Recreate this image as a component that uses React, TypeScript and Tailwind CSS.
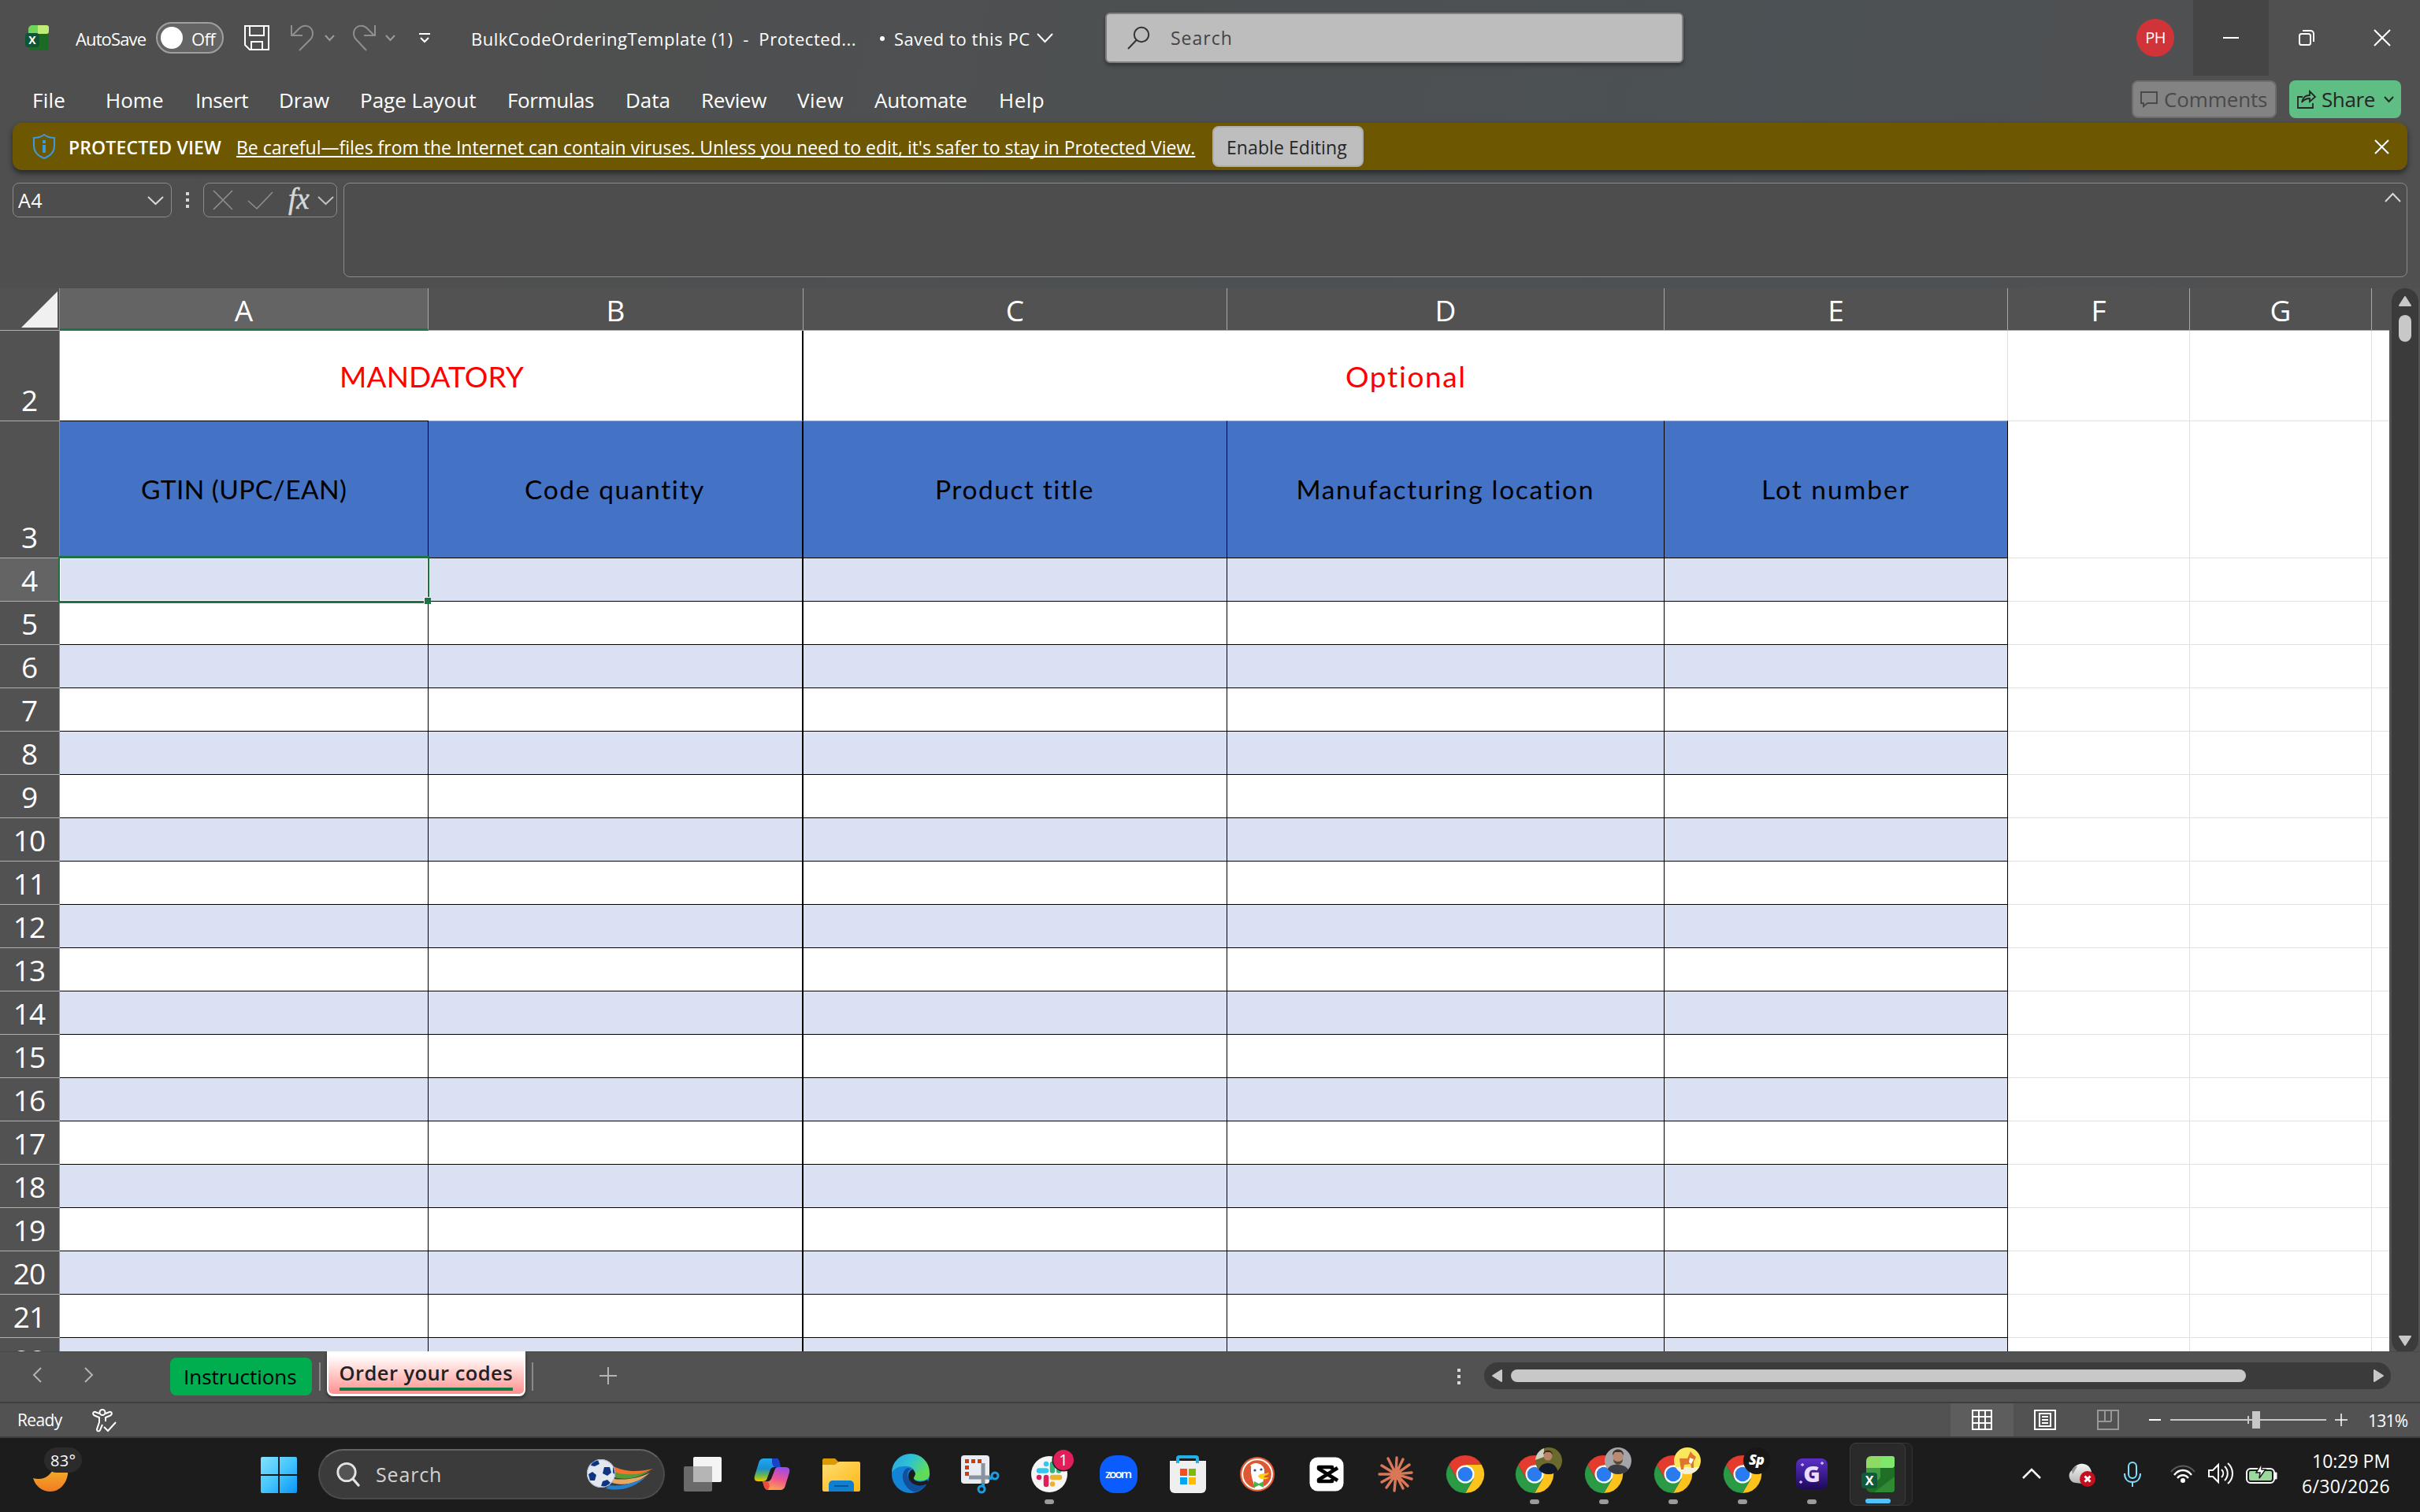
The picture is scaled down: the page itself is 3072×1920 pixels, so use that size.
import React, { useLayoutEffect, useRef, useState } from "react";

/** A label whose tracking is computed so the text fills the width of its box. */
function T({ className = "", inner: innerClass = "", children }: { className?: string; inner?: string; children: string }) {
  const box = useRef<HTMLSpanElement>(null);
  const inner = useRef<HTMLSpanElement>(null);
  const [track, setTrack] = useState(0);
  useLayoutEffect(() => {
    if (!box.current || !inner.current) return;
    const free = box.current.clientWidth - inner.current.offsetWidth;
    setTrack(free / children.length);
  }, [children]);
  return (
    <span ref={box} className={`block shrink-0 whitespace-nowrap leading-none ${className}`}>
      <span ref={inner} className={`inline-block ${innerClass}`} style={{ letterSpacing: track }}>
        {children}
      </span>
    </span>
  );
}

type SvgProps = { className?: string; w: number; h: number; children: React.ReactNode };
function Svg({ className = "", w, h, children }: SvgProps) {
  return (
    <svg
      width={w}
      height={h}
      viewBox={`0 0 ${w} ${h}`}
      fill="none"
      stroke="currentColor"
      strokeWidth={2}
      className={`block shrink-0 overflow-visible ${className}`}
    >
      {children}
    </svg>
  );
}

function Chevron({ className = "", w = 19, h = 9, sw = 2 }: { className?: string; w?: number; h?: number; sw?: number }) {
  return (
    <Svg w={w} h={h} className={className}>
      <path d={`M0 0 L${w / 2} ${h} L${w} 0`} strokeWidth={sw} />
    </Svg>
  );
}

function TitleBar() {
  return (
    <div className="flex h-24 items-center text-[22px] text-white">
      <Svg w={30} h={32} className="ml-8">
        <g stroke="none">
          <path d="M4 5a5 5 0 0 1 5-5h9v12H4z" fill="#6fd65c" />
          <path d="M16 0h11a3 3 0 0 1 3 3v5a3 3 0 0 1-3 3H16z" fill="#bfee78" />
          <path d="M4 11h26v18a3 3 0 0 1-3 3H9a5 5 0 0 1-5-5z" fill="#1d6a26" />
          <rect x="0" y="10" width="18" height="18" rx="4" fill="#0f5434" />
          <text x="9" y="24" fontSize="14" fontWeight="700" textAnchor="middle" fill="#fff" fontFamily="Open Sans, sans-serif">X</text>
        </g>
      </Svg>
      <T className="ml-[34px] mt-px w-[89px]">AutoSave</T>
      <div className="ml-[13px] flex h-10 w-[86px] items-center rounded-full border-2 border-[#a0a0a0] bg-[#646464]">
        <div className="ml-1 h-7 w-7 rounded-full bg-white" />
        <T className="ml-[11px] mt-px w-[30px]">Off</T>
      </div>
      <Svg w={32} h={32} className="ml-[26px]">
        <path d="M1 1H31V31H7L1 25Z M7 1V13H25V1 M9 31V21H23V31" />
      </Svg>
      <Svg w={30} h={32} className="ml-[27px] text-[#8f8f8f]">
        <path d="M1 0V13H15 M2 13L11 4C16 -1 24 0 27 6C29 10 28 15 25 18L11 32" />
      </Svg>
      <Chevron w={11} h={6} className="ml-[14px] text-[#9a9a9a]" />
      <Svg w={30} h={32} className="ml-[23px] text-[#8f8f8f]">
        <path d="M29 0V13H15 M28 13L19 4C14 -1 6 0 3 6C1 10 2 15 5 18L18 32" />
      </Svg>
      <Chevron w={11} h={6} className="ml-[13px] text-[#9a9a9a]" />
      <Svg w={14} h={12} className="ml-[31px]">
        <path d="M0 1H14 M2 6L7 11L12 6" />
      </Svg>
      <T className="ml-[52px] mt-px w-[489px]">{"BulkCodeOrderingTemplate (1)\u00a0 -\u00a0 Protected..."}</T>
      <div className="ml-[30px] mt-[2px] h-[6px] w-[6px] rounded-full bg-white" />
      <T className="ml-3 mt-px w-[173px]">Saved to this PC</T>
      <Chevron w={19} h={10} className="ml-[9px]" />
      <div className="ml-[67px] flex h-16 w-[735px] items-center rounded-md border-2 border-[#7f7f7f] bg-[#bdbdbd] text-[#444] shadow-[0_3px_5px_rgba(0,0,0,0.35)]">
        <Svg w={28} h={29} className="ml-[26px] text-[#333]">
          <circle cx="18" cy="10" r="9.2" />
          <path d="M11.5 17L1 28" />
        </Svg>
        <T className="ml-[27px] w-[79px] text-[23px]">Search</T>
      </div>
      <div className="ml-[575px] flex h-12 w-12 items-center justify-center rounded-full bg-[#d13438]">
        <T className="w-[26px] text-xl">PH</T>
      </div>
      <div className="ml-6 flex h-24 w-24 items-center justify-center bg-[#454546]">
        <div className="h-[2px] w-5 bg-white" />
      </div>
      <div className="flex h-24 w-24 items-center justify-center">
        <Svg w={20} h={20}>
          <rect x="1" y="5" width="14" height="14" rx="2.5" />
          <path d="M5 1H15A4 4 0 0 1 19 5V15" />
        </Svg>
      </div>
      <div className="flex h-24 w-24 items-center justify-center">
        <Svg w={20} h={20}>
          <path d="M0 0L20 20M20 0L0 20" />
        </Svg>
      </div>
    </div>
  );
}

const tabs: [string, string][] = [
  ["File", "ml-[41px] w-[42px]"],
  ["Home", "ml-[51px] w-[73px]"],
  ["Insert", "ml-[41px] w-[67px]"],
  ["Draw", "ml-[39px] w-[64px]"],
  ["Page Layout", "ml-[39px] w-[147px]"],
  ["Formulas", "ml-[40px] w-[110px]"],
  ["Data", "ml-[40px] w-[57px]"],
  ["Review", "ml-[39px] w-[83px]"],
  ["View", "ml-[39px] w-[59px]"],
  ["Automate", "ml-[39px] w-[118px]"],
  ["Help", "ml-[40px] w-[58px]"],
];

function MenuBar() {
  return (
    <div className="flex h-[60px] items-center text-[26px] text-white">
      {tabs.map(([name, cls]) => (
        <T key={name} className={`mt-[2px] ${cls}`}>{name}</T>
      ))}
      <div className="ml-auto mr-4 flex h-12 w-[184px] items-center rounded-lg border-2 border-[#6c6c6c] bg-[#838383] text-[#4a4a4a]">
        <Svg w={22} h={20} className="ml-[9px]">
          <path d="M1 1H21V15H9L4 19V15H1Z" />
        </Svg>
        <T className="ml-[8px] w-[131px]">Comments</T>
      </div>
      <div className="mr-6 flex h-12 w-[142px] items-center rounded-lg bg-[#5fbe83] text-[#262626]">
        <Svg w={23} h={23} className="ml-[10px]">
          <path d="M7 8H1V22H20V16 M6 15C7 9 11 6 16 6V1L23 8L16 14V10C12 10 9 11 6 15Z" strokeWidth={1.8} />
        </Svg>
        <T className="ml-[8px] w-[68px]">Share</T>
        <Chevron w={11} h={6} className="ml-3" />
      </div>
    </div>
  );
}

function ProtectedBar() {
  return (
    <div className="mx-4 flex h-[60px] items-center rounded-xl bg-[#6d5700] text-[23px] text-white shadow-[0_4px_7px_rgba(0,0,0,0.5)]">
      <Svg w={28} h={32} className="ml-[26px] text-[#3a9ad9]">
        <path d="M14 1C10 4 6 5 1 5V15C1 23 6 28 14 31C22 28 27 23 27 15V5C22 5 18 4 14 1Z" />
        <path d="M14 8V12M14 14V24" strokeWidth={4} />
      </Svg>
      <T className="ml-[17px] mt-[2px] w-[194px] font-semibold">PROTECTED VIEW</T>
      <T
        className="ml-[19px] mt-[2px] w-[1217px]"
        inner="underline decoration-[1.5px] underline-offset-[2px] [text-decoration-skip-ink:none]"
      >
        Be careful—files from the Internet can contain viruses. Unless you need to edit, it's safer to stay in Protected View.
      </T>
      <div className="ml-[22px] flex h-[52px] w-48 items-center justify-center rounded-lg border-2 border-[#adadad] bg-[#bebebe] text-[#262626]">
        <T className="mt-[2px] mr-[3px] w-[153px]">Enable Editing</T>
      </div>
      <Svg w={17} h={17} className="ml-auto mr-6">
        <path d="M0 0L17 17M17 0L0 17" />
      </Svg>
    </div>
  );
}

function FormulaBar() {
  return (
    <div className="mt-4 flex h-[134px] items-start pl-4 text-white">
      <div className="flex h-11 w-[202px] items-center rounded-lg border border-[#8b8b8b] bg-[#4d4d4d]">
        <T className="ml-[6px] w-[31px] text-[25px]">A4</T>
        <Chevron className="ml-[134px] text-[#d8d8d8]" />
      </div>
      <div className="ml-[18px] mt-3 flex flex-col gap-1">
        <div className="h-1 w-1 bg-[#d8d8d8]" />
        <div className="h-1 w-1 bg-[#d8d8d8]" />
        <div className="h-1 w-1 bg-[#d8d8d8]" />
      </div>
      <div className="ml-[18px] flex h-11 w-[170px] items-center rounded-lg border border-[#8b8b8b] bg-[#4d4d4d] text-[#8e8e8e]">
        <Svg w={24} h={24} className="ml-3">
          <path d="M0 0L24 24M24 0L0 24" strokeWidth={1.6} />
        </Svg>
        <Svg w={31} h={21} className="ml-5">
          <path d="M0 11L11 21L31 0" strokeWidth={1.6} />
        </Svg>
        <span className="ml-[20px] w-[30px] pb-1 font-['Liberation_Serif',serif] text-[37px] leading-none text-[#d8d8d8] italic [-webkit-text-stroke:0.5px_#d8d8d8]">
          fx
        </span>
        <Chevron className="ml-[8px] text-[#c0c0c0]" />
      </div>
      <div className="ml-2 flex h-[120px] w-[2620px] justify-end rounded-lg border border-[#8b8b8b] bg-[#4d4d4d] pr-2 pt-[13px] text-[#d8d8d8]">
        <Chevron w={19} h={10} className="rotate-180" />
      </div>
    </div>
  );
}

const columns: { name: string; w: string; title?: string; tw?: string; line: string }[] = [
  { name: "A", w: "w-[468px]", title: "GTIN (UPC/EAN)", tw: "w-[261px]", line: "border-r" },
  { name: "B", w: "w-[476px]", title: "Code quantity", tw: "w-[230px]", line: "border-r-2" },
  { name: "C", w: "w-[538px]", title: "Product title", tw: "w-[203px]", line: "border-r" },
  { name: "D", w: "w-[555px]", title: "Manufacturing location", tw: "w-[379px]", line: "border-r" },
  { name: "E", w: "w-[436px]", title: "Lot number", tw: "w-[189px]", line: "border-r" },
  { name: "F", w: "w-[231px]", line: "border-r" },
  { name: "G", w: "w-[231px]", line: "border-r" },
  { name: "", w: "w-[22px]", line: "" },
];
const tableColumns = columns.slice(0, 5);
const emptyColumns = columns.slice(5);
const rows = Array.from({ length: 19 }, (_, i) => i + 4);

function RowHead({ n, active = false }: { n: number; active?: boolean }) {
  return (
    <div
      className={`flex w-[76px] shrink-0 items-end justify-center border-r border-b border-r-[#8e8e8e] border-b-[#b0b0b0] text-[37px] text-white ${
        active ? "bg-[#646464]" : "bg-[#525252]"
      }`}
    >
      <span className="mr-px flex h-[54px] items-center leading-none tracking-[-1px]">{n}</span>
    </div>
  );
}

function EmptyCells() {
  return (
    <>
      {emptyColumns.map((c, i) => (
        <div key={i} className={`shrink-0 border-b border-[#e1e1e1] bg-white ${c.w} ${c.line}`} />
      ))}
    </>
  );
}

function Grid() {
  return (
    <div className="flex h-[1350px] w-[3033px] flex-col overflow-hidden bg-white">
      <div className="flex h-[54px] shrink-0 bg-[#525252]">
        <div className="flex w-[76px] shrink-0 items-start justify-end border-r border-b border-r-[#8e8e8e] border-b-[#b0b0b0] pr-[2px] pt-1">
          <Svg w={46} h={46}>
            <path d="M46 0V46H0Z" fill="#f0f0f0" stroke="none" />
          </Svg>
        </div>
        {columns.map((c, i) => (
          <div
            key={i}
            className={`flex shrink-0 items-center justify-center pt-px text-[37px] leading-none text-white ${c.w} ${
              i === 0
                ? "border-r border-b-3 border-r-[#a8a8a8] border-b-[#1f7244] bg-[#646464]"
                : i === 7
                  ? "border-b border-[#a8a8a8]"
                  : "border-r border-b border-[#a8a8a8]"
            }`}
          >
            <span className={i === 0 ? "mt-[2px]" : ""}>{c.name}</span>
          </div>
        ))}
      </div>

      <div className="flex h-[115px] shrink-0 font-['Lato',sans-serif] text-[37px] text-[#ff0000]">
        <div className="flex font-['Open_Sans',sans-serif]">
          <RowHead n={2} />
        </div>
        <div className="flex w-[944px] shrink-0 items-center justify-center border-r-2 border-black">
          <T className="ml-[2px] w-[234px]">MANDATORY</T>
        </div>
        <div className="flex w-[1529px] shrink-0 items-center justify-center border-r border-[#e1e1e1]">
          <T className="ml-[2px] w-[154px]">Optional</T>
        </div>
        <EmptyCells />
      </div>

      <div className="flex h-[174px] shrink-0 text-[33.5px] text-black">
        <RowHead n={3} />
        {tableColumns.map((c, i) => (
          <div
            key={c.name}
            className={`-mt-px flex h-[175px] shrink-0 items-center justify-center border-t border-r-black border-b border-b-black bg-[#4472c4] pt-px font-['Lato',sans-serif] ${c.w} ${c.line} ${
              i === 0 ? "border-t-black" : "border-t-[#8fa9dc]"
            }`}
          >
            <T className={c.tw}>{c.title!}</T>
          </div>
        ))}
        <EmptyCells />
      </div>

      {rows.map((n) => (
        <div key={n} className="flex h-[55px] shrink-0">
          <RowHead n={n} active={n === 4} />
          {tableColumns.map((c) => (
            <div
              key={c.name}
              className={`relative shrink-0 border-b border-black ${c.w} ${c.line} ${n % 2 === 0 ? "bg-[#d9e1f2]" : "bg-white"}`}
            >
              {n === 4 && c.name === "A" && (
                <div className="absolute -top-[3px] -right-[2px] -bottom-[3px] -left-[2px] z-10 border-x-2 border-y-3 border-[#1f7244]">
                  <div className="h-full w-full border border-white" />
                  <div className="absolute -right-1 -bottom-1 h-[9px] w-[9px] border-t border-l border-white bg-[#1f7244]" />
                </div>
              )}
            </div>
          ))}
          <EmptyCells />
        </div>
      ))}
    </div>
  );
}

function VerticalScroll() {
  return (
    <div className="ml-[3px] flex h-[1353px] w-[34px] flex-col items-center rounded-full bg-[#3b3b3b] text-[#c8c8c8]">
      <Svg w={18} h={14} className="mt-[10px]">
        <path d="M9 1L16 12H2Z" fill="currentColor" strokeLinejoin="round" />
      </Svg>
      <div className="mt-[10px] h-[34px] w-4 rounded-lg bg-[#c8c8c8]" />
      <Svg w={18} h={14} className="mt-auto mb-[10px]">
        <path d="M9 13L16 2H2Z" fill="currentColor" strokeLinejoin="round" />
      </Svg>
    </div>
  );
}

function SheetTabs() {
  return (
    <div className="flex h-16 items-start border-t border-[#464a48] bg-[#525252] text-[#b4b4b4]">
      <Svg w={11} h={18} className="ml-[42px] mt-5">
        <path d="M10 0L1 9L10 18" />
      </Svg>
      <Svg w={11} h={18} className="ml-[54px] mt-5">
        <path d="M1 0L10 9L1 18" />
      </Svg>
      <div className="ml-[98px] mt-[7px] flex h-12 w-[180px] items-center justify-center rounded-lg bg-[#00ae50] text-black">
        <T className="mr-[2px] w-[144px] text-[26px]">Instructions</T>
      </div>
      <div className="ml-[9px] mt-[13px] h-9 w-[2px] bg-[#8a8a8a]" />
      <div className="-mt-px ml-2 flex h-[57px] w-[252px] flex-col items-center rounded-b-lg border-x-2 border-b-[3px] border-white bg-linear-to-b from-white from-10% to-[#ff8f8f] text-[#222] shadow-[0_2px_4px_rgba(0,0,0,0.5)]">
        <T className="mt-[15px] w-[221px] text-[25.5px] font-semibold">Order your codes</T>
        <div className="mt-[5px] h-1 w-[220px] bg-[#107c41]" />
      </div>
      <div className="ml-2 mt-[13px] h-9 w-[2px] bg-[#8a8a8a]" />
      <Svg w={22} h={22} className="ml-[84px] mt-[19px]">
        <path d="M0 11H22M11 0V22" />
      </Svg>
      <div className="ml-[1067px] mt-[21px] flex flex-col gap-1">
        <div className="h-1 w-1 bg-[#d8d8d8]" />
        <div className="h-1 w-1 bg-[#d8d8d8]" />
        <div className="h-1 w-1 bg-[#d8d8d8]" />
      </div>
      <div className="ml-[30px] mt-[13px] flex h-[34px] w-[1151px] items-center rounded-full bg-[#3b3b3b] text-[#c8c8c8]">
        <Svg w={14} h={18} className="ml-[10px]">
          <path d="M1 9L12 2V16Z" fill="currentColor" strokeLinejoin="round" />
        </Svg>
        <div className="ml-[10px] h-4 w-[933px] rounded-full bg-[#c8c8c8]" />
        <Svg w={14} h={18} className="mr-[9px] ml-auto">
          <path d="M13 9L2 2V16Z" fill="currentColor" strokeLinejoin="round" />
        </Svg>
      </div>
    </div>
  );
}

function StatusBar() {
  return (
    <div className="flex h-[46px] items-center border-y-2 border-[#3e3e3e] bg-[#525252] text-[21px] text-white">
      <T className="ml-[22px] mt-px w-[57px]">Ready</T>
      <Svg w={32} h={29} className="ml-[38px]">
        <circle cx="13" cy="4.5" r="3.5" />
        <path d="M9 6L4 4C1 3 0 7 3 8.500L9 11V17L6 26C6 29 9 29 10 27L13 20M17 6L22 4C25 3 26 7 23 8.500L17 11V16M15 23L20 28L30 17" />
      </Svg>
      <div className="ml-auto flex h-[42px] w-20 items-center justify-center bg-[#5d5d5d]">
        <Svg w={26} h={26}>
          <path d="M1 1H25V25H1ZM1 9H25M1 17H25M9 1V25M17 1V25" />
        </Svg>
      </div>
      <Svg w={28} h={26} className="ml-[26px]">
        <path d="M1 1H27V25H1ZM7 5H21V21H7ZM10 9H18M10 13H18M10 17H18" />
      </Svg>
      <Svg w={28} h={26} className="ml-[52px] text-[#989898]">
        <path d="M1 1H27V25H1ZM10 1V15M18 1V15M1 15H18" />
      </Svg>
      <div className="ml-[38px] h-[2px] w-[15px] bg-white" />
      <div className="relative ml-3 h-[2px] w-[198px] bg-[#c8c8c8]">
        <div className="absolute -top-1 left-[98px] h-[10px] w-[2px] bg-[#c8c8c8]" />
        <div className="absolute -top-[10px] left-[104px] h-[22px] w-[10px] bg-[#c8c8c8]" />
      </div>
      <Svg w={16} h={16} className="ml-[11px]">
        <path d="M0 8H16M8 0V16" strokeWidth={1.5} />
      </Svg>
      <T className="mt-[2px] mr-[16px] ml-[26px] w-[50px]">131%</T>
    </div>
  );
}

function Chrome() {
  return (
    <g stroke="none">
      <path d="M3.200 12A24 24 0 0 1 44.800 12H24L13.600 30Z" fill="#e33b2e" />
      <path d="M44.800 12A24 24 0 0 1 24 48L34.400 30L24 12Z" fill="#fcc31e" />
      <path d="M24 48A24 24 0 0 1 3.200 12L13.600 30H34.400Z" fill="#2a9a47" />
      <circle cx="24" cy="24" r="11.500" fill="#fff" />
      <circle cx="24" cy="24" r="9.300" fill="#2b7bf0" />
    </g>
  );
}

const taskIcons: { name: string; dot?: boolean; art: React.ReactNode }[] = [
  {
    name: "Task view",
    art: (
      <>
        <rect x="12" y="2" width="36" height="32" rx="2" fill="#f4f4f4" />
        <rect x="0" y="14" width="36" height="32" rx="2" fill="#6a6a6a" />
        <path d="M12 14H36V34H12Z" fill="#b5b5b5" />
      </>
    ),
  },
  {
    name: "Copilot",
    art: (
      <>
        <path d="M14 4H29C33 4 33 8 34 14L28 15C24 15 22 17 21 21L18 29C17 32 15 33 12 33H6C2 33 1 30 2 26L7 10C8 6 10 4 14 4Z" fill="url(#cpA)" />
        <path d="M24 4H29C33 4 34 8 35 15H29C26 15 25 13 24 10Z" fill="#1c40c8" />
        <path d="M34 44H19C15 44 14 40 12 33H18C21 33 23 30 24 27L28 17C29 15 31 15 34 15H41C46 15 47 18 46 22L41 38C40 42 38 44 34 44Z" fill="url(#cpB)" />
        <path d="M19 44C15 44 14 40 12 33H17C20 33 20 36 21 39Z" fill="#ee4b3e" />
        <path d="M21 21C22 17 24 15 28 15H30C28 15 28 17 27 19L24 27C23 31 21 33 18 33H17Z" fill="#1c1c1c" />
      </>
    ),
  },
  {
    name: "File Explorer",
    art: (
      <>
        <path d="M0 6A2 2 0 0 1 2 4H16L20 8V16H0Z" fill="#dc9a02" />
        <path d="M0 12H16L21 8H46A2 2 0 0 1 48 10V44A2 2 0 0 1 46 46H2A2 2 0 0 1 0 44Z" fill="url(#fold)" />
        <path d="M8 46V37A5 5 0 0 1 13 32H35A5 5 0 0 1 40 37V46Z" fill="#0f7fd0" />
        <path d="M15 39H33" stroke="#0a559a" strokeWidth="2" />
      </>
    ),
  },
  {
    name: "Edge",
    art: (
      <>
        <circle cx="24" cy="24" r="24" fill="#1383d8" />
        <path d="M0 22A24 24 0 0 1 48 22C49 29 44 32 38 32C32 32 28 31 28 29C28 27 30 26 30 23C29 16 22 13 15 14C8 14 3 17 0 22Z" fill="url(#edgeA)" />
        <path d="M20 16C12 20 12 32 19 40C24 46 30 48 34 45C39 43 43 39 44 36C37 39 25 38 21 29C19 24 20 19 25 17Z" fill="#124f9c" />
        <path d="M30 23C30 27 27 28 28 30C30 34 38 35 45 31L48 38L43 37C33 41 22 36 21 27C21 22 24 18 27 18Z" fill="#1c1c1c" />
        <path d="M28 29C30 33 39 34 46 29L47 24L33 21L30 23C30 27 28 28 28 29Z" fill="#5fd958" />
      </>
    ),
  },
  {
    name: "Snipping Tool",
    art: (
      <>
        <rect width="36" height="36" rx="4" fill="#e9edf1" />
        <g fill="#d83b01">
          <path d="M5 5H10V10H5ZM13 5H18V10H13ZM21 5H26V10H21ZM5 13H10V18H5ZM5 21H10V26H5Z" />
        </g>
        <path d="M28 10V36M10 28H37" stroke="#8a949e" strokeWidth="5" />
        <circle cx="43" cy="26" r="4" stroke="#1b9de2" strokeWidth="3" fill="none" />
        <circle cx="26" cy="43" r="4" stroke="#1b9de2" strokeWidth="3" fill="none" />
        <path d="M35 29H39M28 35V39" stroke="#1b9de2" strokeWidth="4" />
      </>
    ),
  },
  {
    name: "Slack",
    dot: true,
    art: (
      <>
        <circle cx="24" cy="24" r="23" fill="#f6f6f6" />
        <g strokeWidth="6.500" strokeLinecap="round">
          <path d="M20 11V11.100M11 19.500H20" stroke="#36c5f0" />
          <path d="M28 11V19.500M36 19.500V19.400" stroke="#2eb67d" />
          <path d="M28 28H37M28 36.500V36.400" stroke="#ecb22e" />
          <path d="M20 28V37M11 28V28.100" stroke="#e01e5a" />
        </g>
        <circle cx="42" cy="6" r="14.500" fill="#1c1c1c" />
        <circle cx="42" cy="6" r="13" fill="#e01e5a" />
        <text x="42" y="13" fontSize="20" textAnchor="middle" fill="#fff">1</text>
      </>
    ),
  },
  {
    name: "Zoom",
    art: (
      <>
        <rect width="48" height="48" rx="20" fill="#0b5cff" />
        <text x="24" y="28.500" fontSize="15" fontWeight="600" textAnchor="middle" textLength="34" fill="#fff">zoom</text>
      </>
    ),
  },
  {
    name: "Microsoft Store",
    art: (
      <>
        <path d="M11 10V4Q11 2 13 2H34Q36 2 36 4V10" stroke="#20b0ea" strokeWidth="4" fill="none" />
        <path d="M1 7H47V42A6 6 0 0 1 41 48H7A6 6 0 0 1 1 42Z" fill="#efefef" />
        <path d="M11 6V10M36 6V10" stroke="#20b0ea" strokeWidth="4" />
        <path d="M14 17H23V26H14Z" fill="#f25022" />
        <path d="M25 17H34V26H25Z" fill="#7fba00" />
        <path d="M14 28H23V37H14Z" fill="#00a4ef" />
        <path d="M25 28H34V37H25Z" fill="#ffb900" />
      </>
    ),
  },
  {
    name: "DuckDuckGo",
    art: (
      <>
        <circle cx="24" cy="24" r="22" fill="#de5833" />
        <circle cx="24" cy="24" r="18.800" fill="#de5833" stroke="#fff" strokeWidth="2" />
        <path d="M18 11C24 8 33 12 33 20C33 28 30 32 33 41C28 43 24 43 21 42C20 35 16 28 16 20C16 16 17 14 15 13Z" fill="#fff" />
        <circle cx="21" cy="19" r="1.600" fill="#2d4f8e" />
        <circle cx="29" cy="18" r="1.600" fill="#2d4f8e" />
        <path d="M25 26C29 22 33 24 39 22C38 25 34 26 31 27C34 29 37 28 39 28C36 32 26 31 25 26Z" fill="#fdd20a" />
        <path d="M20 33L26 36L32 33V41L26 38L20 41Z" fill="#43b649" />
      </>
    ),
  },
  {
    name: "CapCut",
    art: (
      <>
        <rect x="2.500" y="2.500" width="43" height="43" rx="10" fill="#fff" />
        <path d="M38 16L14 31V33H31V30M38 32L14 17V15H31V18" stroke="#000" strokeWidth="4.500" strokeLinejoin="round" fill="none" />
      </>
    ),
  },
  {
    name: "Claude",
    art: (
      <g stroke="#d97757" strokeWidth="3.400" strokeLinecap="round">
        <path d="M24 24L14 4M24 24L25 3M24 24L33 5M24 24L41 12M24 24L44 22M24 24L44 30M24 24L39 39M24 24L33 42M24 24L22 45M24 24L12 41M24 24L6 34M24 24L3 24M24 24L6 13" />
        <circle cx="24" cy="24" r="4" fill="#d97757" />
      </g>
    ),
  },
  { name: "Chrome", art: <Chrome /> },
  {
    name: "Chrome profile 1",
    dot: true,
    art: (
      <>
        <Chrome />
        <g clipPath="url(#pic)">
          <rect x="25" y="-10" width="34" height="34" fill="#6b6a2e" />
          <path d="M25 -10H36V2L25 6Z" fill="#cfcfc4" />
          <circle cx="41" cy="1" r="5.500" fill="#b98468" />
          <path d="M35 -1C35 -8 47 -8 47 -1L44 -4H38Z" fill="#3b2a1e" />
          <path d="M28 24C29 13 35 10 41 10S53 13 54 24Z" fill="#12182a" />
        </g>
      </>
    ),
  },
  {
    name: "Chrome profile 2",
    dot: true,
    art: (
      <>
        <Chrome />
        <g clipPath="url(#pic)">
          <rect x="25" y="-10" width="34" height="34" fill="#a3a5a8" />
          <ellipse cx="42" cy="2" rx="6.500" ry="8.500" fill="#b98a74" />
          <path d="M35 0C34 -10 50 -10 49 0L46 -4H38Z" fill="#3d322c" />
          <path d="M36 5C38 9 46 9 48 5C48 14 36 14 36 5Z" fill="#5d4538" />
          <path d="M26 26C28 14 34 11 42 12S55 14 58 26Z" fill="#3a3c44" />
        </g>
      </>
    ),
  },
  {
    name: "Chrome profile 3",
    dot: true,
    art: (
      <>
        <Chrome />
        <g clipPath="url(#pic)">
          <rect x="25" y="-10" width="34" height="34" fill="#fbe75c" />
          <path d="M25 15H59V26H25Z" fill="#f7f1d6" />
          <path d="M32 4L42 4L46 -5L49 -1L53 2L50 8L50 16H47L46 11L38 12L37 18H34L33 12Z" fill="#e0762c" />
          <path d="M45 3L50 5L47 11L44 9Z" fill="#fff" />
        </g>
      </>
    ),
  },
  {
    name: "Chrome profile 4",
    dot: true,
    art: (
      <>
        <Chrome />
        <circle cx="42" cy="7" r="17" fill="#171717" />
        <text x="42" y="12" fontSize="18" fontWeight="800" fontStyle="italic" textAnchor="middle" textLength="20" fill="#fff">Sp</text>
      </>
    ),
  },
  {
    name: "G app",
    dot: true,
    art: (
      <>
        <rect x="4" y="4" width="40" height="39" rx="8" fill="url(#gapp)" />
        <text x="24" y="34" fontSize="29" fontWeight="800" textAnchor="middle" fill="#eadcff">G</text>
        <path d="M10 12h4M12 10v4M35 10h4M37 8v4M8 34h4M10 32v4" stroke="#d8c4ff" strokeWidth="1.300" />
      </>
    ),
  },
];

function TaskIcon({ children, dot }: { children: React.ReactNode; dot?: boolean }) {
  return (
    <div className="flex h-[94px] w-[88px] shrink-0 flex-col items-center pt-[22px]">
      <svg width="48" height="48" viewBox="0 0 48 48" fill="none" className="block overflow-visible font-['Open_Sans',sans-serif]">
        {children}
      </svg>
      {dot && <div className="mt-2 h-[6px] w-3 rounded-full bg-[#9a9a9a]" />}
    </div>
  );
}

function Defs() {
  return (
    <svg width="0" height="0" className="absolute">
      <defs>
        <linearGradient id="cpA" x1="0" y1="0" x2="0" y2="1">
          <stop offset="0" stopColor="#22a7f2" />
          <stop offset="0.450" stopColor="#1b8fd0" />
          <stop offset="0.750" stopColor="#6cb848" />
          <stop offset="1" stopColor="#f4c800" />
        </linearGradient>
        <linearGradient id="cpB" x1="0.600" y1="0" x2="0.300" y2="1">
          <stop offset="0" stopColor="#a04be8" />
          <stop offset="0.500" stopColor="#f0568e" />
          <stop offset="1" stopColor="#ffa64d" />
        </linearGradient>
        <linearGradient id="fold" x1="0" y1="0" x2="1" y2="1">
          <stop offset="0" stopColor="#ffdc74" />
          <stop offset="1" stopColor="#fdb813" />
        </linearGradient>
        <linearGradient id="edgeA" x1="0" y1="0" x2="1" y2="0.500">
          <stop offset="0" stopColor="#2f9fe8" />
          <stop offset="0.500" stopColor="#2cc3d2" />
          <stop offset="1" stopColor="#64dd55" />
        </linearGradient>
        <linearGradient id="gapp" x1="0" y1="0" x2="0" y2="1">
          <stop offset="0" stopColor="#5a2fc8" />
          <stop offset="1" stopColor="#1d0a5a" />
        </linearGradient>
        <linearGradient id="win" x1="0" y1="0" x2="1" y2="1">
          <stop offset="0" stopColor="#84e0ff" />
          <stop offset="0.500" stopColor="#45c6fc" />
          <stop offset="1" stopColor="#0a94fb" />
        </linearGradient>
        <linearGradient id="moon" x1="0" y1="0" x2="0" y2="1">
          <stop offset="0" stopColor="#f3b62c" />
          <stop offset="1" stopColor="#f07d22" />
        </linearGradient>
        <linearGradient id="cloud" x1="0" y1="0" x2="0" y2="1">
          <stop offset="0" stopColor="#f5f5f5" />
          <stop offset="1" stopColor="#b4b4b4" />
        </linearGradient>
        <clipPath id="pic">
          <circle cx="42" cy="7" r="17" />
        </clipPath>
      </defs>
    </svg>
  );
}

function Taskbar() {
  return (
    <div className="flex h-[94px] items-start bg-[#1c1c1c] text-white">
      <div className="relative ml-[42px] h-[94px] w-[62px]">
        <Svg w={46} h={34} className="mt-[35px]">
          <path d="M27 0H43C48 14 38 33 22 33C11 33 3 26 0 16C12 20 24 13 27 0Z" fill="url(#moon)" stroke="none" />
        </Svg>
        <div className="absolute top-3 left-[14px] flex h-8 w-12 items-center justify-center rounded-full bg-[#2b2b2b]">
          <T className="mt-px w-8 text-[20px]">83°</T>
        </div>
      </div>
      <Svg w={46} h={46} className="ml-[227px] mt-6">
        <path d="M2 0H22V22H0V2A2 2 0 0 1 2 0ZM24 0H44A2 2 0 0 1 46 2V22H24ZM0 24H22V46H2A2 2 0 0 1 0 44ZM24 24H46V44A2 2 0 0 1 44 46H24Z" fill="url(#win)" stroke="none" />
      </Svg>
      <div className="ml-[27px] mt-[14px] flex h-16 w-[440px] items-center rounded-full border-2 border-[#4b4b4b] border-t-[#646464] bg-[#3b3b3b]">
        <Svg w={30} h={30} className="ml-[21px] text-[#e4e4e4]">
          <circle cx="13" cy="12.500" r="11.200" strokeWidth={2.800} fill="#545454" />
          <path d="M21 21L28 29" strokeWidth={3.400} strokeLinecap="round" />
        </Svg>
        <T className="ml-[20px] mt-px w-[84px] text-[25px] text-[#d2d2d2]">Search</T>
        <Svg w={84} h={38} className="ml-auto mr-[13px]">
          <g stroke="none">
            <path d="M32 8C46 16 64 17 84 12C64 23 46 22 34 16Z" fill="#f0752c" />
            <path d="M34 16C48 21 66 20 80 15C62 26 46 26 35 23Z" fill="#579a38" />
            <path d="M34 25C50 27 66 24 80 17C64 32 46 34 32 30Z" fill="#e8a860" />
            <path d="M28 33C46 35 60 30 76 22C58 38 40 41 24 37Z" fill="#2680cc" />
            <circle cx="18" cy="18" r="18" fill="#e3e8f0" />
            <path d="M7 2L14 1L16 6L10 9L5 8ZM22 10L29 10L31 17L26 21L20 18ZM7 16L12 20L10 27L4 27L2 19ZM20 28L26 26L30 30L24 35L18 34ZM33 9L35 12L36 20L33 17Z" fill="#0d3580" />
          </g>
          <circle cx="18" cy="18" r="17.500" stroke="#a9b6cc" strokeWidth={1} />
        </Svg>
      </div>
      <div className="ml-1 flex">
        {taskIcons.map((t) => (
          <TaskIcon key={t.name} dot={t.dot}>{t.art}</TaskIcon>
        ))}
      </div>
      <div className="mt-[6px] ml-1 flex h-20 w-20 rounded-lg border border-[#333] bg-[#222]">
        <div className="-m-px flex h-20 w-[71px] flex-col items-center rounded-lg border border-[#3d3d3d] bg-[#2a2a2a] pt-4">
          <Svg w={42} h={46}>
            <g stroke="none">
              <path d="M6 6A6 6 0 0 1 12 0H26V24H6Z" fill="#8edb62" />
              <rect x="24" y="0" width="18" height="15" rx="3" fill="#7ee86b" />
              <path d="M6 23L20 15H42V42A4 4 0 0 1 38 46H12A6 6 0 0 1 6 40Z" fill="#1f6f26" />
              <path d="M6 15H24V26A6 6 0 0 1 18 31H6Z" fill="#3f9a40" />
              <path d="M16 46L42 26V42A4 4 0 0 1 38 46Z" fill="#2f8a33" />
              <rect x="0" y="21" width="20" height="20" rx="4" fill="#0f5a3a" />
              <text x="10" y="37" fontSize="16" fontWeight="700" textAnchor="middle" fill="#fff" fontFamily="Open Sans, sans-serif">X</text>
            </g>
          </Svg>
          <div className="mt-2 h-[6px] w-8 rounded-full bg-[#4cc2ff]" />
        </div>
      </div>
      <div className="ml-[140px] flex h-[90px] items-center">
        <Chevron w={22} h={11} sw={2.500} className="rotate-180" />
        <Svg w={33} h={30} className="ml-[37px] mt-1">
          <g stroke="none">
            <path d="M8 25A9 9 0 0 1 3 9C7 2 14 0 18 1C24 2 27 6 28 11L16 26Z" fill="url(#cloud)" />
            <path d="M3 9C6 3 10 4 10 4L4 14Z" fill="#909090" />
            <circle cx="23" cy="20" r="10" fill="#c50f1f" />
          </g>
          <path d="M19.500 16.500L26.500 23.500M26.500 16.500L19.500 23.500" strokeWidth={3} />
        </Svg>
        <Svg w={22} h={32} className="ml-[36px] mt-[2px] text-[#7fdfff]">
          <rect x="6" y="1" width="10" height="20" rx="5" />
          <path d="M1 15C1 22 5 26 11 26S21 22 21 15M11 26V32" />
        </Svg>
        <Svg w={32} h={24} className="ml-[37px] mt-[2px]">
          <path d="M1 9C9 -1 23 -1 31 9" stroke="#5a5a5a" />
          <path d="M5 13C11 5 21 5 27 13M9 17C13 12 19 12 23 17" strokeWidth={2.400} />
          <circle cx="16" cy="20" r="3" fill="#fff" stroke="none" />
        </Svg>
        <Svg w={33} h={28} className="ml-4">
          <path d="M1 10H6L13 3V25L6 18H1ZM17 9C20 12 20 16 17 19M21 5C26 10 26 18 21 23M25 1C33 8 33 20 25 27" />
        </Svg>
        <Svg w={40} h={26} className="ml-[15px]">
          <rect x="1" y="7" width="35" height="18" rx="5" />
          <rect x="4" y="10" width="29" height="12" rx="2" fill="#9bd89b" stroke="none" />
          <path d="M37 12H39V20H37Z" fill="#fff" stroke="#fff" strokeWidth={1} />
          <path d="M20 0L13 12H18L17 19L25 8H20Z" fill="#fff" stroke="#1c1c1c" strokeWidth={1.500} />
        </Svg>
      </div>
      <div className="mt-[18px] mr-[38px] ml-auto flex flex-col items-end gap-[9px] text-[23px]">
        <T className="w-[99px]">10:29 PM</T>
        <T className="w-[112px]">6/30/2026</T>
      </div>
    </div>
  );
}

export default function App() {
  return (
    <div className="flex h-[1920px] w-[3072px] flex-col overflow-hidden bg-[#525252] font-['Open_Sans','Noto_Sans',sans-serif]">
      <Defs />
      <div className="h-[366px] shrink-0 bg-linear-100 from-[#4f4f4f] from-20% via-[#4b5154] via-72% to-[#505051] to-92%">
        <TitleBar />
        <MenuBar />
        <ProtectedBar />
        <FormulaBar />
      </div>
      <div className="flex h-[1350px] shrink-0">
        <Grid />
        <VerticalScroll />
      </div>
      <SheetTabs />
      <StatusBar />
      <Taskbar />
    </div>
  );
}
